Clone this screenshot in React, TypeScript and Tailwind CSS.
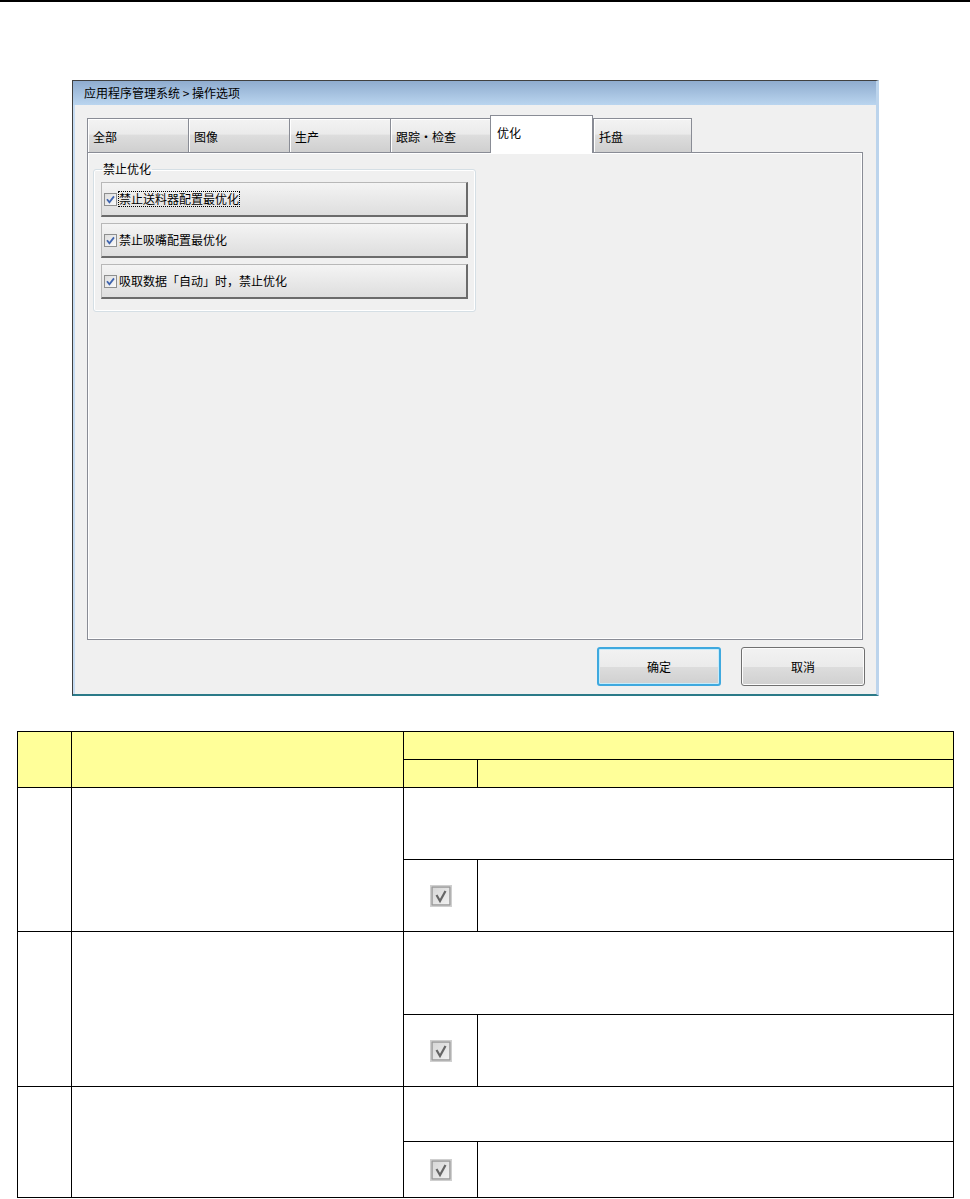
import React from 'react'

const tabs = [
  { label: '全部', w: 'w-[102px]' },
  { label: '图像', w: 'w-[102px]' },
  { label: '生产', w: 'w-[102px]' },
  { label: '跟踪・检查', w: 'w-[101px]' },
  { label: '优化', w: 'w-[103px]', active: true },
  { label: '托盘', w: 'w-[99px]' },
]

const options = ['禁止送料器配置最优化', '禁止吸嘴配置最优化', '吸取数据「自动」时，禁止优化']

function SmallCheck() {
  return (
    <svg width="13" height="13" viewBox="0 0 13 13" className="shrink-0">
      <defs>
        <linearGradient id="sc" x1="0" y1="0" x2="1" y2="1">
          <stop offset="0" stopColor="#dcdcdc" />
          <stop offset="1" stopColor="#fbfbfb" />
        </linearGradient>
      </defs>
      <rect x="0.5" y="0.5" width="12" height="12" fill="url(#sc)" stroke="#8e8f8f" />
      <path d="M3 6.3 L5.4 9.2 L10 3.4" fill="none" stroke="#3f64ae" strokeWidth="1.8" />
    </svg>
  )
}

function GrayCheck() {
  return (
    <svg width="22" height="22" viewBox="0 0 22 22" className="mx-auto block">
      <defs>
        <linearGradient id="gc" x1="0" y1="0" x2="1" y2="1">
          <stop offset="0" stopColor="#d6d6d6" />
          <stop offset="1" stopColor="#f2f2f2" />
        </linearGradient>
      </defs>
      <rect x="0.5" y="0.5" width="21" height="21" fill="none" stroke="#cfcfcf" />
      <rect x="2" y="2" width="18" height="18" fill="url(#gc)" stroke="#999999" strokeWidth="1.5" />
      <path d="M6.5 10 L10 16 L15.5 6" fill="none" stroke="#666666" strokeWidth="2.2" />
    </svg>
  )
}

function Dialog() {
  return (
    <div className="ml-[72px] w-[807px] h-[616px] flex flex-col bg-[#f0f0f0] border-t border-l border-[#404040] border-r-[3px] border-r-[#bcd4ec] border-b-2 border-b-[#2b7a88]">
      {/* title bar */}
      <div className="h-[24px] shrink-0 flex items-center pl-[11px] bg-[linear-gradient(#8faccf,#bad5ef)] text-[12px] text-black whitespace-pre">
        {'应用程序管理系统 > 操作选项'}
      </div>

      <div className="flex-1 flex flex-col pl-[14px] pr-[11px] pt-[10px] shadow-[inset_2px_0_0_#c6dcf2]">
        {/* tabs */}
        <div className="flex items-end h-[37px]">
          {tabs.map((t) =>
            t.active ? (
              <div
                key={t.label}
                className={`${t.w} h-[38px] -mb-px relative z-10 bg-white border border-b-0 border-[#898c95] flex items-center pl-[6px] pb-[3px] text-[12px]`}
              >
                {t.label}
              </div>
            ) : (
              <div
                key={t.label}
                className={`${t.w} h-[34px] -mr-px border border-b-0 border-[#898c95] bg-[linear-gradient(#f3f3f3,#ebebeb_45%,#dddddd_50%,#cfcfcf)] shadow-[inset_1px_1px_0_#ffffff] flex items-center pl-[5px] pt-[2px] text-[12px]`}
              >
                {t.label}
              </div>
            )
          )}
        </div>

        {/* tab panel */}
        <div className="w-[776px] h-[488px] border border-[#898c95] bg-[#f0f0f0] shadow-[inset_0_0_0_1px_#ffffff] pl-[5px] pt-[9px]">
          <fieldset className="w-[383px] h-[150px] border border-[#d5dfe5] rounded-[3px] shadow-[inset_0_0_0_1px_#ffffff] px-[7px] pt-[6px]">
            <legend className="ml-[1px] px-[1px] text-[12px] leading-[14px]">禁止优化</legend>
            <div className="flex flex-col gap-[6px]">
              {options.map((o, i) => (
                <div
                  key={o}
                  className="h-[35px] w-[367px] flex items-center gap-[2px] pl-[2px] border border-[#b8b8b8] border-r-2 border-b-2 border-r-[#6b6b6b] border-b-[#6b6b6b] bg-[linear-gradient(#f4f4f4,#e9e9e9_50%,#dedede)] text-[12px]"
                >
                  <SmallCheck />
                  <span className={i === 0 ? 'outline outline-1 outline-dotted outline-black leading-[14px]' : 'leading-[14px]'}>
                    {o}
                  </span>
                </div>
              ))}
            </div>
          </fieldset>
        </div>

        {/* buttons */}
        <div className="flex justify-end gap-[20px] mt-[7px]">
          <button className="w-[124px] h-[39px] rounded-[3px] border-2 border-[#3fa9df] shadow-[inset_0_0_0_1px_#c6ecfb] bg-[linear-gradient(#f2f2f2,#ebebeb_50%,#dddddd_50%,#d0d0d0)] text-[12px]">
            确定
          </button>
          <button className="w-[124px] h-[39px] rounded-[3px] border border-[#707070] shadow-[inset_0_0_0_1px_#fcfcfc] bg-[linear-gradient(#f2f2f2,#ebebeb_50%,#dddddd_50%,#d0d0d0)] text-[12px]">
            取消
          </button>
        </div>
      </div>
    </div>
  )
}

export default function App() {
  const td = 'border border-black p-0'
  const hd = 'border border-black p-0 bg-[#ffff99]'

  return (
    <div className="min-h-screen bg-white font-['Noto_Sans_CJK_SC','Noto_Sans',sans-serif] text-black">
      <div className="h-[2px] bg-black" />
      <div className="pt-[78px]">
        <Dialog />
      </div>

      <table className="table-fixed border-collapse ml-[17px] w-[937px] mt-[35px]">
        <colgroup>
          <col className="w-[54px]" />
          <col className="w-[332px]" />
          <col className="w-[74px]" />
          <col />
        </colgroup>
        <tbody>
          <tr className="h-[28px]">
            <td rowSpan={2} className={hd}></td>
            <td rowSpan={2} className={hd}></td>
            <td colSpan={2} className={hd}></td>
          </tr>
          <tr className="h-[28px]">
            <td className={hd}></td>
            <td className={hd}></td>
          </tr>

          <tr className="h-[72px]">
            <td rowSpan={2} className={td}></td>
            <td rowSpan={2} className={td}></td>
            <td colSpan={2} className={td}></td>
          </tr>
          <tr className="h-[72px]">
            <td className={td}><GrayCheck /></td>
            <td className={td}></td>
          </tr>

          <tr className="h-[83px]">
            <td rowSpan={2} className={td}></td>
            <td rowSpan={2} className={td}></td>
            <td colSpan={2} className={td}></td>
          </tr>
          <tr className="h-[72px]">
            <td className={td}><GrayCheck /></td>
            <td className={td}></td>
          </tr>

          <tr className="h-[55px]">
            <td rowSpan={2} className={td}></td>
            <td rowSpan={2} className={td}></td>
            <td colSpan={2} className={td}></td>
          </tr>
          <tr className="h-[56px]">
            <td className={td}><GrayCheck /></td>
            <td className={td}></td>
          </tr>
        </tbody>
      </table>
    </div>
  )
}
